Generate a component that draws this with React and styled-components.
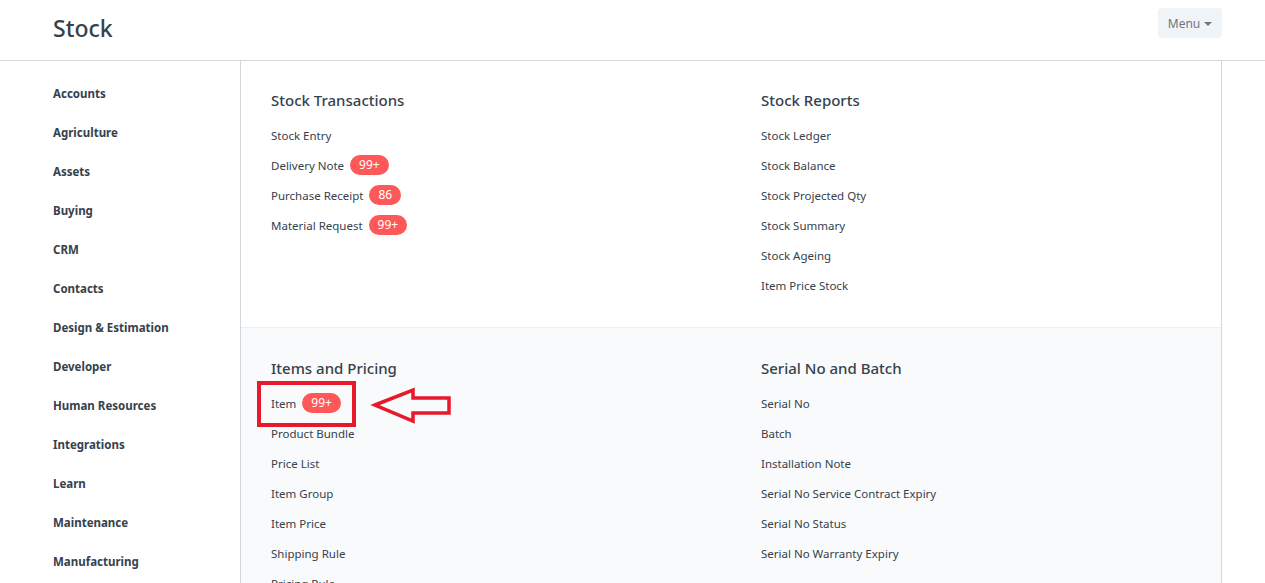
import styled, { createGlobalStyle } from "styled-components";

const GlobalStyle = createGlobalStyle`
  html, body {
    margin: 0;
    padding: 0;
    background: #fff;
    font-family: "Noto Sans", "Open Sans", sans-serif;
    color: #36414c;
    overflow: hidden;
  }
  * { box-sizing: border-box; }
`;

const colors = {
  text: "#36414c",
  border: "#d1d8dd",
  light: "#ebeff2",
  badge: "#ff5858",
  annot: "#e8192a",
};

const PageHeader = styled.header`
  height: 61px;
  border-bottom: 1px solid ${colors.border};
  display: flex;
  align-items: flex-start;
  justify-content: space-between;
  padding: 0 43px 0 53px;
`;

const Title = styled.h1`
  margin: 0;
  font-size: 23px;
  font-weight: 500;
  line-height: 57px;
  color: ${colors.text};
`;

const MenuButton = styled.button`
  margin-top: 8px;
  height: 30px;
  width: 64px;
  border: none;
  border-radius: 4px;
  background: #f0f4f7;
  color: #6c7680;
  font-family: inherit;
  font-size: 12px;
  display: flex;
  align-items: center;
  justify-content: center;
  gap: 4px;
  padding: 0;
`;

const Caret = styled.span`
  width: 0;
  height: 0;
  border-left: 4px solid transparent;
  border-right: 4px solid transparent;
  border-top: 4px solid #6c7680;
  margin-top: 1px;
`;

const Layout = styled.div`
  display: flex;
`;

const Sidebar = styled.nav`
  width: 241px;
  flex-shrink: 0;
  border-right: 1px solid ${colors.border};
  padding: 13px 0 0 53px;
`;

const SideItem = styled.div`
  font-size: 11.5px;
  font-weight: 700;
  line-height: 39px;
  height: 39px;
  color: ${colors.text};
`;

const Main = styled.main`
  width: 981px;
  flex: none;
  border-right: 1px solid ${colors.border};
`;

const Section = styled.section`
  display: grid;
  grid-template-columns: 490px 1fr;
  padding: ${(p) => (p.shaded ? "30px" : "29px")} 0 27px 30px;
  background: ${(p) => (p.shaded ? "#f9fafb" : "#fff")};
  border-bottom: 1px solid ${colors.light};
`;

const Heading = styled.h3`
  margin: 0 0 10px;
  font-size: 15px;
  font-weight: 500;
  line-height: 20px;
  color: ${colors.text};
`;

const LinkRow = styled.div`
  position: relative;
  height: 30px;
  display: flex;
  align-items: center;
  gap: 6px;
  font-size: 11.5px;
  color: ${colors.text};
`;

const Badge = styled.span`
  background: ${colors.badge};
  color: #fff;
  border-radius: 10px;
  height: 20px;
  padding: 0 9px;
  font-size: 12px;
  line-height: 20px;
`;

const Annotation = styled.svg`
  position: absolute;
  left: -16px;
  top: -9px;
  pointer-events: none;
  overflow: visible;
`;

const sidebarItems = [
  "Accounts",
  "Agriculture",
  "Assets",
  "Buying",
  "CRM",
  "Contacts",
  "Design & Estimation",
  "Developer",
  "Human Resources",
  "Integrations",
  "Learn",
  "Maintenance",
  "Manufacturing",
];

const sections = [
  [
    {
      title: "Stock Transactions",
      links: [
        ["Stock Entry"],
        ["Delivery Note", "99+"],
        ["Purchase Receipt", "86"],
        ["Material Request", "99+"],
      ],
    },
    {
      title: "Stock Reports",
      links: [
        ["Stock Ledger"],
        ["Stock Balance"],
        ["Stock Projected Qty"],
        ["Stock Summary"],
        ["Stock Ageing"],
        ["Item Price Stock"],
      ],
    },
  ],
  [
    {
      title: "Items and Pricing",
      links: [
        ["Item", "99+", true],
        ["Product Bundle"],
        ["Price List"],
        ["Item Group"],
        ["Item Price"],
        ["Shipping Rule"],
        ["Pricing Rule"],
      ],
    },
    {
      title: "Serial No and Batch",
      links: [
        ["Serial No"],
        ["Batch"],
        ["Installation Note"],
        ["Serial No Service Contract Expiry"],
        ["Serial No Status"],
        ["Serial No Warranty Expiry"],
      ],
    },
  ],
];

const Highlight = () => (
  <Annotation width="200" height="50" viewBox="0 0 200 50">
    <rect
      x="4"
      y="4"
      width="95"
      height="42"
      fill="none"
      stroke={colors.annot}
      strokeWidth="4"
    />
    <polygon
      points="120,26 158,11 158,19 194,19 194,34 158,34 158,42"
      fill="none"
      stroke={colors.annot}
      strokeWidth="3.5"
      strokeLinejoin="miter"
    />
  </Annotation>
);

export default function App() {
  return (
    <>
      <GlobalStyle />
      <PageHeader>
        <Title>Stock</Title>
        <MenuButton>
          Menu <Caret />
        </MenuButton>
      </PageHeader>
      <Layout>
        <Sidebar>
          {sidebarItems.map((s) => (
            <SideItem key={s}>{s}</SideItem>
          ))}
        </Sidebar>
        <Main>
          {sections.map((cols, i) => (
            <Section key={i} shaded={i === 1}>
              {cols.map((col) => (
                <div key={col.title}>
                  <Heading>{col.title}</Heading>
                  {col.links.map(([label, count, marked]) => (
                    <LinkRow key={label}>
                      {label}
                      {count && <Badge>{count}</Badge>}
                      {marked && <Highlight />}
                    </LinkRow>
                  ))}
                </div>
              ))}
            </Section>
          ))}
        </Main>
      </Layout>
    </>
  );
}
